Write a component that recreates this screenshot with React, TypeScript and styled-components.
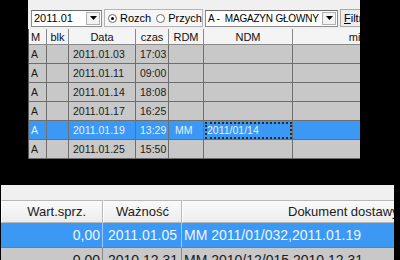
import React from 'react';
import styled, { createGlobalStyle } from 'styled-components';

const Global = createGlobalStyle`
  html, body {
    margin: 0;
    padding: 0;
    background: #000;
  }
  body {
    width: 400px;
    height: 260px;
    overflow: hidden;
    font-family: "Liberation Sans", Arial, sans-serif;
  }
`;

const Page = styled.div`
  width: 400px;
  height: 260px;
  display: flex;
  flex-direction: column;
  background: #000;
`;

const TopPanel = styled.div`
  margin-left: 28px;
  width: 332px;
  height: 159px;
  background: #f0f0f0;
  display: flex;
  flex-direction: column;
  overflow: hidden;
`;

const Toolbar = styled.div`
  height: 20px;
  margin-top: 8px;
  display: flex;
  align-items: center;
  gap: 2px;
  padding-left: 3px;
  font-size: 11px;
  color: #000;
`;

const Combo = styled.div<{ $w: number }>`
  width: ${(p) => p.$w}px;
  height: 17px;
  box-sizing: border-box;
  border: 1px solid #8c8c8c;
  border-top-color: #6a6a6a;
  background: #fff;
  display: flex;
  align-items: center;
  padding-left: 2px;
  flex-shrink: 0;
`;

const ComboText = styled.span<{ $narrow?: boolean }>`
  flex: 1;
  white-space: nowrap;
  overflow: hidden;
  font-size: ${(p) => (p.$narrow ? '10px' : '11px')};
  letter-spacing: ${(p) => (p.$narrow ? '-0.2px' : '0')};
`;

const DropBtn = styled.div`
  width: 14px;
  height: 13px;
  margin-right: 1px;
  box-sizing: border-box;
  border: 1px solid #b0b0b0;
  background: #f2f2f2;
  display: flex;
  align-items: center;
  justify-content: center;
  flex-shrink: 0;
`;

const Arrow = () => (
  <svg width="7" height="4" viewBox="0 0 7 4">
    <path d="M0 0h7L3.5 4z" fill="#000" />
  </svg>
);

const RadioGroup = styled.div`
  width: 99px;
  height: 18px;
  box-sizing: border-box;
  border: 1px solid #b4b4b4;
  background: #f6f6f6;
  display: flex;
  align-items: center;
  padding-left: 3px;
  gap: 3px;
  flex-shrink: 0;
  overflow: hidden;
`;

const Radio = styled.span<{ $on?: boolean }>`
  width: 9px;
  height: 9px;
  box-sizing: border-box;
  border-radius: 50%;
  border: 1px solid #6a6a6a;
  background: #fff;
  display: inline-flex;
  align-items: center;
  justify-content: center;
  flex-shrink: 0;
  &::after {
    content: '';
    width: 3px;
    height: 3px;
    border-radius: 50%;
    background: ${(p) => (p.$on ? '#000' : 'transparent')};
  }
`;

const RadioLabel = styled.span`
  font-size: 11px;
  margin-right: 2px;
`;

const FilterBtn = styled.div`
  height: 18px;
  flex: 1;
  box-sizing: border-box;
  border: 1px solid #a8a8a8;
  border-right: none;
  background: #ececec;
  padding-left: 3px;
  display: flex;
  align-items: center;
  font-size: 11px;
  white-space: nowrap;
  overflow: hidden;
  u {
    text-decoration: underline;
  }
`;

const cols = '18px 22px 67px 33px 35px 89px 150px';

const Grid = styled.div`
  margin-top: 1px;
  display: grid;
  grid-template-columns: ${cols};
  grid-auto-rows: 19px;
  grid-template-rows: 16px;
  border-left: 1px solid #5a5a5a;
  font-size: 10px;
`;

const Head = styled.div<{ $left?: boolean }>`
  background: #f4f4f4;
  border-right: 1px solid #8a8a8a;
  border-bottom: 1px solid #8a8a8a;
  display: flex;
  align-items: center;
  justify-content: ${(p) => (p.$left ? 'flex-start' : 'center')};
  padding-left: ${(p) => (p.$left ? '2px' : '0')};
  font-size: 11px;
  color: #111;
  white-space: nowrap;
  overflow: hidden;
`;

const Cell = styled.div<{ $sel?: boolean; $focus?: boolean; $pad?: number }>`
  background: ${(p) => (p.$sel ? '#3b98f5' : '#c8c8c8')};
  color: ${(p) => (p.$sel ? '#e4f1ff' : '#1a1a1a')};
  border-right: 1px solid #6e6e6e;
  border-bottom: 1px solid #6e6e6e;
  display: flex;
  align-items: center;
  padding-left: ${(p) => p.$pad ?? 2}px;
  font-size: 10.5px;
  white-space: nowrap;
  overflow: hidden;
  ${(p) => p.$focus && `outline: 2px dotted #2a2a2a; outline-offset: -3px;`}
`;

const BottomPanel = styled.div`
  margin-top: 26px;
  margin-left: 1px;
  width: 393px;
  height: 75px;
  background: #f0f0f0;
  display: flex;
  flex-direction: column;
  overflow: hidden;
`;

const bcols = '102px 79px 300px';

const BRow = styled.div<{ $h: number }>`
  display: grid;
  grid-template-columns: ${bcols};
  height: ${(p) => p.$h}px;
  flex-shrink: 0;
`;

const BHead = styled.div<{ $align: string; $pad?: number }>`
  background: linear-gradient(#fafafa, #ececec);
  border: 1px solid #b8b8b8;
  border-left-color: #fff;
  display: flex;
  align-items: center;
  justify-content: ${(p) => p.$align};
  padding: 0 ${(p) => p.$pad ?? 0}px;
  font-size: 13px;
  color: #1a1a1a;
  white-space: nowrap;
  overflow: hidden;
`;

const BCell = styled.div<{ $sel?: boolean; $right?: boolean; $pad?: number }>`
  background: ${(p) => (p.$sel ? '#3b98f5' : '#c8c8c8')};
  color: ${(p) => (p.$sel ? '#eef6ff' : '#1a1a1a')};
  border-right: 1px solid ${(p) => (p.$sel ? '#9ccaf8' : '#8a8a8a')};
  border-bottom: 1px solid #7a7a7a;
  display: flex;
  align-items: center;
  justify-content: ${(p) => (p.$right ? 'flex-end' : 'flex-start')};
  padding: 0 ${(p) => p.$pad ?? 2}px;
  font-size: 14px;
  white-space: nowrap;
  overflow: hidden;
`;

const rows = [
  { d: '2011.01.03', t: '17:03', rdm: '', ndm: '' },
  { d: '2011.01.11', t: '09:00', rdm: '', ndm: '' },
  { d: '2011.01.14', t: '18:08', rdm: '', ndm: '' },
  { d: '2011.01.17', t: '16:25', rdm: '', ndm: '' },
  { d: '2011.01.19', t: '13:29', rdm: 'MM', ndm: '2011/01/14', sel: true },
  { d: '2011.01.25', t: '15:50', rdm: '', ndm: '' },
];

export default function App() {
  return (
    <>
      <Global />
      <Page>
        <TopPanel>
          <Toolbar>
            <Combo $w={71}>
              <ComboText>2011.01</ComboText>
              <DropBtn>
                <Arrow />
              </DropBtn>
            </Combo>
            <RadioGroup>
              <Radio $on />
              <RadioLabel>Rozch</RadioLabel>
              <Radio />
              <RadioLabel>Przych</RadioLabel>
            </RadioGroup>
            <Combo $w={133}>
              <ComboText $narrow>A -&nbsp; MAGAZYN GŁÓWNY</ComboText>
              <DropBtn>
                <Arrow />
              </DropBtn>
            </Combo>
            <FilterBtn>
              <u>F</u>iltr
            </FilterBtn>
          </Toolbar>
          <Grid>
            <Head $left>M</Head>
            <Head>blk</Head>
            <Head>Data</Head>
            <Head>czas</Head>
            <Head>RDM</Head>
            <Head>NDM</Head>
            <Head>miejsce</Head>
            {rows.map((r, i) => (
              <React.Fragment key={i}>
                <Cell $sel={r.sel}>A</Cell>
                <Cell $sel={r.sel} />
                <Cell $sel={r.sel} $pad={4}>{r.d}</Cell>
                <Cell $sel={r.sel} $pad={4}>{r.t}</Cell>
                <Cell $sel={r.sel} $pad={6}>{r.rdm}</Cell>
                <Cell $sel={r.sel} $focus={r.sel} $pad={3}>{r.ndm}</Cell>
                <Cell $sel={r.sel} />
              </React.Fragment>
            ))}
          </Grid>
        </TopPanel>
        <BottomPanel>
          <BRow $h={15} />
          <BRow $h={23}>
            <BHead $align="flex-end" $pad={16}>Wart.sprz.</BHead>
            <BHead $align="center">Ważność</BHead>
            <BHead $align="flex-start" $pad={105}>Dokument dostawy</BHead>
          </BRow>
          <BRow $h={25}>
            <BCell $sel $right>0,00</BCell>
            <BCell $sel $pad={5}>2011.01.05</BCell>
            <BCell $sel $pad={2}>MM 2011/01/032,2011.01.19</BCell>
          </BRow>
          <BRow $h={25}>
            <BCell $right>0,00</BCell>
            <BCell $pad={5}>2010.12.31</BCell>
            <BCell $pad={2}>MM 2010/12/015,2010.12.31</BCell>
          </BRow>
        </BottomPanel>
      </Page>
    </>
  );
}
